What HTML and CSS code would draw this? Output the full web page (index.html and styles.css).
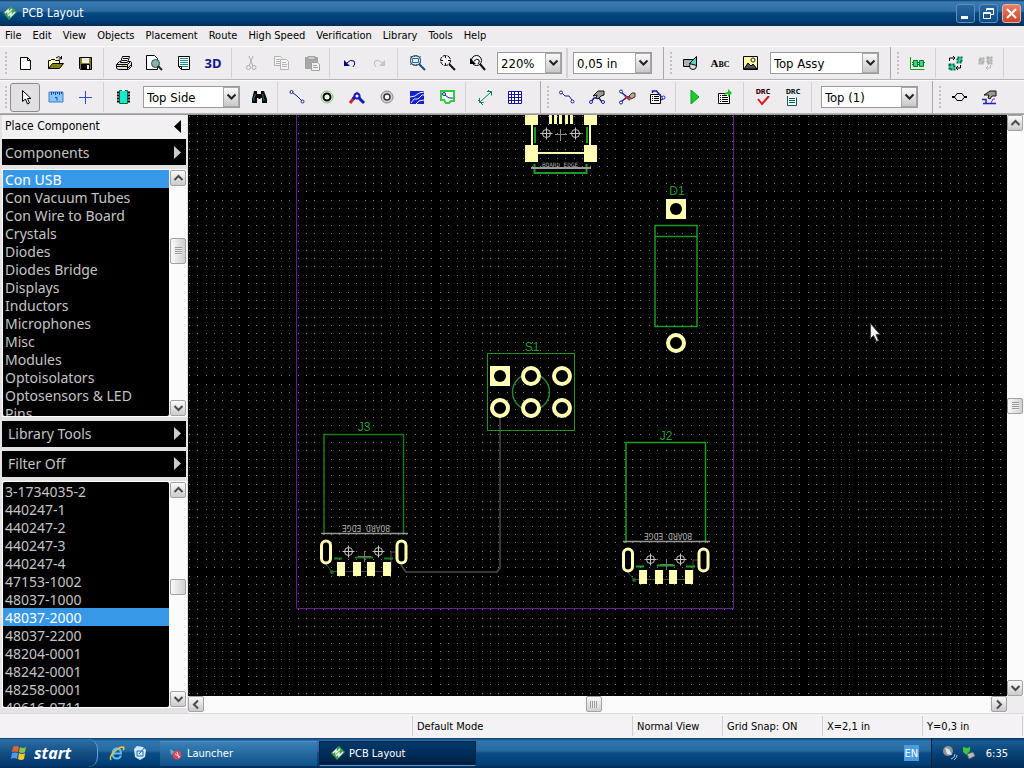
FILE: index.html
```html
<!DOCTYPE html>
<html lang="en">

<head>
    <meta charset="UTF-8">
    <meta name="viewport" content="width=device-width, initial-scale=1.0">
    <title>PCB Layout</title>
    <link rel="stylesheet" href="styles.css">
</head>

<body>
    <header class="title-bar">
        <svg class="app-icon" width="16" height="16" viewBox="0 0 16 16">
            <path d="M9 1l6 6-8 8-6-7z" fill="#3a9a50" />
            <path d="M3 8l3-3v3l4-4M6 11l3-3v3l4-4" fill="none" stroke="#eaf8e6" stroke-width="1.500" />
        </svg>
        <h1>PCB Layout</h1>
        <div class="window-btns">
            <button class="win-btn" title="Minimize"><svg width="17" height="17"><path d="M4 11h7v3h-7z" fill="#fff" /></svg></button>
            <button class="win-btn" title="Restore"><svg width="17" height="17" fill="none" stroke="#fff"><path d="M6.500 6v-2.500h7v6h-3M6 4.500h8" /><path d="M3.500 7.500h7v6h-7zM3 8.500h8" /></svg></button>
            <button class="win-btn close" title="Close"><svg width="17" height="17"><path d="M4 4l9 9M13 4l-9 9" stroke="#fff" stroke-width="2" /></svg></button>
        </div>
    </header>

    <nav class="menu">
        <a href="#">File</a>
        <a href="#">Edit</a>
        <a href="#">View</a>
        <a href="#">Objects</a>
        <a href="#">Placement</a>
        <a href="#">Route</a>
        <a href="#">High Speed</a>
        <a href="#">Verification</a>
        <a href="#">Library</a>
        <a href="#">Tools</a>
        <a href="#">Help</a>
    </nav>

    <!-- standard, drawing and placement toolbars -->
    <div class="toolbar-row">
        <div class="toolbar">
            <span class="grip"></span>
            <button class="tool" title="New"><svg class="icon" viewBox="0 0 20 20"><path d="M5.500 4.500h7l3 3v9h-10z" fill="#fff" stroke="#000" /><path d="M12.500 4.500v3h3" fill="none" stroke="#000" /></svg></button>
            <button class="tool" title="Open"><svg class="icon" viewBox="0 0 20 20"><path d="M3.500 15.500v-8h2l1-1h3l1 1h4v3" fill="#ffffa8" stroke="#000" /><path d="M3.500 15.500l4-5h11l-4 5z" fill="#808020" stroke="#000" /><path d="M11 5q3-3 5 0M16.500 3v3h-3" fill="none" stroke="#000" /></svg></button>
            <button class="tool" title="Save"><svg class="icon" viewBox="0 0 20 20"><path d="M4.500 4.500h12v12h-11l-1-1z" fill="#808020" stroke="#000" /><path d="M7 5h7v5h-7z" fill="#eee" /><path d="M6 11h9v6h-9z" fill="#000" /><path d="M12 12h2v4h-2z" fill="#eee" /></svg></button>
            <span class="sep"></span>
            <button class="tool" title="Print"><svg class="icon" viewBox="0 0 20 20" stroke="#000"><path d="M3.500 11.500l3-3h11l1 1v4l-3 3h-10l-2-1z" fill="#ddd" /><path d="M7.500 9.500l2-6h7l-2 6z" fill="#fff" /><path d="M10 5.500h5M9 7.500h5M3.500 11.500h11v5M14.500 11.500l3-3M4 13.500h10M15 15l4-4" fill="none" /><path d="M9 12.500h3" stroke="#cc0" /></svg></button>
            <button class="tool" title="Print preview"><svg class="icon" viewBox="0 0 20 20"><path d="M3.500 2.500h8l3 3v11h-11z" fill="#fff" stroke="#000" /><circle cx="12.500" cy="10.500" r="4" fill="#7fb5b5" stroke="#444" /><path d="M15 13l4 4" stroke="#222" stroke-width="2" /></svg></button>
            <button class="tool" title="Report"><svg class="icon" viewBox="0 0 20 20"><path d="M5.500 3.500h11v13h-8l-3-3z" fill="#fff" stroke="#000" /><path d="M7 5.500h8M7 7.500h8M7 9.500h8M7 11.500h8M9 13.500h6" stroke="#1a9090" /><path d="M5.500 13.500h3v3" fill="none" stroke="#000" /></svg></button>
            <button class="tool text-3d" title="3D preview">3D</button>
            <span class="sep"></span>
            <button class="tool" title="Cut" disabled><svg class="icon" viewBox="0 0 20 20" fill="none" stroke="#b0b0b0"><path d="M8 3l4 10M12 3l-4 10" /><circle cx="7.500" cy="14.500" r="2" /><circle cx="13" cy="14.500" r="2" /></svg></button>
            <button class="tool" title="Copy" disabled><svg class="icon" viewBox="0 0 20 20" fill="#f4f4f4" stroke="#b4b4b4"><path d="M3.500 3.500h6l2 2v7h-8z" /><path d="M9.500 6.500h6l2 2v8h-8z" /><path d="M5 6.500h4M5 8.500h4M5 10.500h4M11 9.500h4M11 11.500h5M11 13.500h5" /></svg></button>
            <button class="tool" title="Paste" disabled><svg class="icon" viewBox="0 0 20 20" fill="#a8a8a8" stroke="#a0a0a0"><path d="M4.500 4.500h12v11h-12z" /><path d="M7 3.500h7v3h-7z" fill="#ccc" /><path d="M10.500 9.500h6l2 2v6h-8z" fill="#f0f0f0" /><path d="M12 12.500h4M12 14.500h5" /></svg></button>
            <span class="sep"></span>
            <button class="tool" title="Undo"><svg class="icon" viewBox="0 0 20 20"><path d="M8 10q3-4 7-2 2 3-1 6" fill="none" stroke="#000080" /><path d="M5 7v6h6z" fill="#000080" /></svg></button>
            <button class="tool" title="Redo" disabled><svg class="icon" viewBox="0 0 20 20"><path d="M13 10q-3-4-7-2-2 3 1 6" fill="none" stroke="#bbb" /><path d="M16 7v6h-6z" fill="#c4c4c4" /></svg></button>
            <span class="sep"></span>
            <button class="tool" title="Zoom window"><svg class="icon" viewBox="0 0 20 20"><circle cx="8.500" cy="7.500" r="5" fill="#e4eef4" stroke="#333" /><path d="M3.500 3.500h10v8h-10z" fill="none" stroke="#24679a" stroke-dasharray="2 1" /><path d="M5.500 5.500h6v4h-6z" fill="none" stroke="#24679a" /><path d="M12 11l6 6" stroke="#14507c" stroke-width="2" /></svg></button>
            <button class="tool" title="Zoom all"><svg class="icon" viewBox="0 0 20 20"><circle cx="8.500" cy="7.500" r="5" fill="#f4f4f4" stroke="#000" stroke-dasharray="4 1" /><path d="M4 7.500h2M11 7.500h2M8.500 3v2M8.500 10v2" stroke="#000" /><path d="M12 11l6 6" stroke="#111" stroke-width="2" /></svg></button>
            <button class="tool" title="Zoom previous"><svg class="icon" viewBox="0 0 20 20"><circle cx="9.500" cy="7.500" r="5" fill="#f4f4f4" stroke="#000" /><path d="M3 5v6h6z" fill="#000" /><path d="M7 8q3-3 5-1 1 2-1 4" fill="none" stroke="#000" /><path d="M13 11l5 6" stroke="#111" stroke-width="2" /></svg></button>
            <span class="combo zoom">
                <select aria-label="Zoom"><option>220%</option></select>
                <span class="combo-arrow"><svg width="11" height="8"><path d="M1.500 1.500l4 4 4-4" /></svg></span>
            </span>
            <span class="sep narrow"></span>
            <span class="combo grid-size">
                <select aria-label="Grid"><option>0,05 in</option></select>
                <span class="combo-arrow"><svg width="11" height="8"><path d="M1.500 1.500l4 4 4-4" /></svg></span>
            </span>
        </div>
        <div class="toolbar">
            <span class="grip"></span>
            <button class="tool" title="Place shape"><svg class="icon" viewBox="0 0 20 20" stroke="#000"><path d="M3.500 6.500h9v7h-9z" fill="#a8b4b4" /><circle cx="13" cy="13" r="3.500" fill="#ddd" /><path d="M9.500 10.500l7-7v9z" fill="#4fd6d0" /></svg></button>
            <button class="tool abc" title="Place text">A<small>BC</small></button>
            <button class="tool" title="Place picture"><svg class="icon" viewBox="0 0 20 20"><path d="M3.500 3.500h14v13h-14z" fill="#ffffa0" stroke="#000" /><path d="M4 16l4-6 3 3 2-2 4 5z" fill="#555" stroke="#000" /><circle cx="13" cy="7" r="2" fill="#fff" stroke="#222" /></svg></button>
            <span class="combo assy">
                <select aria-label="Drawing layer"><option>Top Assy</option></select>
                <span class="combo-arrow"><svg width="11" height="8"><path d="M1.500 1.500l4 4 4-4" /></svg></span>
            </span>
        </div>
        <div class="toolbar last">
            <span class="grip"></span>
            <button class="tool" title="Placement by list"><svg class="icon" viewBox="0 0 20 20"><path d="M3.500 4v12.500h14" fill="none" stroke="#12a012" /><path d="M6.500 7.500h4v6h-4zM12.500 7.500h4v6h-4z" fill="#24d8a8" stroke="#087808" /><path d="M5 9.500h1M5 11.500h1M11 9.500h1M11 11.500h1M17 9.500h1" stroke="#087808" /></svg></button>
            <span class="sep"></span>
            <button class="tool" title="Update from schematic"><svg class="icon" viewBox="0 0 20 20"><path d="M4.500 11.500h5v5h-5z" fill="#28e0b0" stroke="#064" stroke-width="2" stroke-dasharray="2 1" /><path d="M12.500 4.500h4v5h-4z" fill="#28e0b0" stroke="#064" stroke-width="2" stroke-dasharray="2 1" /><path d="M4.500 8v-3h5M8 3l2 2-2 2M15.500 12v3h-4M13 13l-2 2 2 2" fill="none" stroke="#000" /></svg></button>
            <button class="tool" title="Arrange" disabled><svg class="icon" viewBox="0 0 20 20"><path d="M4.500 5.500h4v5h-4zM12.500 4.500h4v6h-4z" fill="#c4c4c4" stroke="#aaa" stroke-width="2" stroke-dasharray="2 1" /><path d="M15.500 12v3h-4M13 13l-2 2 2 2" fill="none" stroke="#bbb" /></svg></button>
            <span class="sep"></span>
        </div>
    </div>

    <!-- object, route and differential pair toolbars -->
    <div class="toolbar-row objects">
        <div class="toolbar">
            <span class="grip"></span>
            <button class="tool pressed" title="Default mode"><svg class="icon" viewBox="0 0 20 20"><path d="M7.500 3.500v11l3-2.500 2 5 2-1-2-4.500h3.500z" fill="#fff" stroke="#000" /></svg></button>
            <button class="tool" title="Measure"><svg class="icon" viewBox="0 0 20 20"><path d="M4 5h14v10h-14z" fill="#8cc4f4" stroke="#3b7fd0" /><path d="M6.500 5v3M8.500 5v2M10.500 5v3M12.500 5v2M14.500 5v3M16.500 5v2M10 10.500h2v3" fill="none" stroke="#124aa8" /></svg></button>
            <button class="tool" title="Set origin"><svg class="icon" viewBox="0 0 20 20"><path d="M4 10h13v1h-13zM10 4h1v13h-1z" fill="#2450d0" /></svg></button>
            <span class="sep"></span>
            <button class="tool" title="Place component"><svg class="icon" viewBox="0 0 20 20"><path d="M4 5.500h13M4 8.500h13M4 11.500h13M4 14.500h13" stroke="#000" stroke-width="2" /><path d="M6.500 3.500h8v13h-8z" fill="#18e8d0" stroke="#063" /><path d="M9 3.500h3" stroke="#fff" /></svg></button>
            <span class="combo side">
                <select aria-label="Side"><option>Top Side</option></select>
                <span class="combo-arrow"><svg width="11" height="8"><path d="M1.500 1.500l4 4 4-4" /></svg></span>
            </span>
            <button class="tool" title="Find"><svg class="icon" viewBox="0 0 20 20"><path d="M5 4h3v3h4v-3h3l3 8v4h-5v-5h-1l-1 1h-1l-1-1h-1v5h-5v-4z" fill="#0a0a0a" /><path d="M6.500 7l-2 5M13.500 7l1 5M4 13h2M14 13h2" stroke="#1c7c7c" /></svg></button>
            <span class="sep"></span>
            <button class="tool" title="Place trace"><svg class="icon" viewBox="0 0 20 20" fill="none" stroke="#15209a"><path d="M6 6l4 3 5 5" /><circle cx="4.500" cy="5" r="1.500" fill="#fff" /><circle cx="15.500" cy="14.500" r="1.500" fill="#fff" /></svg></button>
            <button class="tool" title="Place via"><svg class="icon" viewBox="0 0 20 20"><circle cx="10" cy="10" r="6" fill="none" stroke="#68d870" /><circle cx="10" cy="10" r="3.500" fill="#fff" stroke="#000" stroke-width="2" /></svg></button>
            <button class="tool" title="Place route"><svg class="icon" viewBox="0 0 20 20" fill="none" stroke-width="3"><path d="M3 16l4-5" stroke="#d42020" /><path d="M6 12l4-5 3 5 4 4" stroke="#1a1ab8" /><circle cx="10" cy="9" r="2.500" fill="#fff" stroke="#1a1ab8" stroke-width="2" /></svg></button>
            <button class="tool" title="Place hole"><svg class="icon" viewBox="0 0 20 20"><circle cx="10" cy="10" r="6" fill="#d0d0d0" stroke="#8a8a8a" /><circle cx="10" cy="10" r="3" fill="#fff" stroke="#333" stroke-width="1.500" /></svg></button>
            <button class="tool" title="Copper pour"><svg class="icon" viewBox="0 0 20 20"><path d="M3 4h14v13h-14z" fill="#1420c8" /><path d="M3 10l5-1 4-3 5-1M4 16l3-4 4 0 4-4 2 0M9 17l3-3 5-1" fill="none" stroke="#eef" /></svg></button>
            <button class="tool" title="Board outline"><svg class="icon" viewBox="0 0 20 20"><path d="M4 4h13v10h-3l-2 2h-3l-2-3h-3z" fill="#f0fff0" stroke="#38c848" stroke-width="2" /><path d="M8 8l4 3h4" fill="none" stroke="#1420a0" /><circle cx="7" cy="7" r="1.500" fill="#fff" stroke="#1420a0" /></svg></button>
            <span class="sep"></span>
            <button class="tool" title="Dimension"><svg class="icon" viewBox="0 0 20 20" fill="none" stroke="#127a6a"><path d="M5 15l11-10M12 4.500h4.500v4M4.500 11v4.500h4M3 13l5 5M13 3l4 4" /></svg></button>
            <button class="tool" title="Place table"><svg class="icon" viewBox="0 0 20 20" fill="#fff" stroke="#15159a"><path d="M3.500 4.500h13v12h-13zM3.500 7.500h13M3.500 10.500h13M3.500 13.500h13M6.500 4.500v12M9.500 4.500v12M13.500 4.500v12" /></svg></button>
        </div>
        <div class="toolbar">
            <span class="grip"></span>
            <button class="tool" title="Route manual"><svg class="icon" viewBox="0 0 20 20" fill="none" stroke="#15209a"><path d="M5 6l3 3h4l3 4" /><circle cx="4" cy="5.500" r="1.500" fill="#fff" /><circle cx="15.500" cy="14.500" r="1.500" fill="#fff" /></svg></button>
            <button class="tool" title="Edit traces"><svg class="icon" viewBox="0 0 20 20" fill="none"><path d="M4 15l3-4h5l3 4" stroke="#15209a" stroke-width="1.500" /><circle cx="4" cy="15" r="1.500" fill="#fff" stroke="#15209a" /><circle cx="16" cy="15" r="1.500" fill="#fff" stroke="#15209a" /><path d="M6 9l5-5h6v4l-3 1-3 3-2-1 1-3z" fill="#9a9a92" stroke="#111" /></svg></button>
            <button class="tool" title="Free edit"><svg class="icon" viewBox="0 0 20 20" fill="none"><path d="M4 5l6 5-6 5M10 10h6" stroke="#15209a" stroke-width="1.500" /><circle cx="4" cy="4.500" r="1.500" fill="#fff" stroke="#15209a" /><circle cx="4" cy="15.500" r="1.500" fill="#fff" stroke="#15209a" /><path d="M12 9l3-3h3v4l-4 2z" fill="#b8a890" stroke="#333" /><path d="M8 9l5 4" stroke="#d02020" stroke-width="2" /></svg></button>
            <button class="tool" title="Route properties"><svg class="icon" viewBox="0 0 20 20"><path d="M3.500 7.500h10v9h-10z" fill="#fff" stroke="#000" /><path d="M5 9.500h1M7 9.500h5M5 11.500h1M7 11.500h5M5 13.500h1M7 13.500h5" stroke="#000" /><path d="M5.500 6v-2h4l5 6M14 13l3-2" fill="none" stroke="#15209a" stroke-width="1.500" /><circle cx="16.500" cy="10.500" r="1.500" fill="#fff" stroke="#15209a" /></svg></button>
            <span class="sep"></span>
            <button class="tool" title="Run autorouter"><svg class="icon" viewBox="0 0 20 20"><path d="M6 3l8 7-8 7z" fill="#14d028" stroke="#0a9a1c" /></svg></button>
            <button class="tool" title="Autorouter setup"><svg class="icon" viewBox="0 0 20 20"><path d="M3.500 6.500h11v10h-11z" fill="#fff" stroke="#000" /><path d="M5 8.500h1M7 8.500h5M5 10.500h1M7 10.500h6M5 12.500h1M7 12.500h6M5 14.500h1M7 14.500h6" stroke="#000" /><path d="M9 8q1-3 4-3v-3l4 4-4 4v-3z" fill="#18c028" /></svg></button>
            <span class="sep"></span>
            <button class="tool stacked" title="Check design rules"><span>DRC</span><svg width="14" height="10"><path d="M2 3l4 5 7-8" fill="none" stroke="#d81818" stroke-width="2" /></svg></button>
            <button class="tool stacked report" title="DRC report"><span>DRC</span><svg width="14" height="10"><path d="M1.500 0v9.500h9v-8" fill="#fff" stroke="#0a5a5a" /><path d="M3 2.500h6M3 4.500h6M3 6.500h6" stroke="#0a5a5a" /></svg></button>
            <span class="sep"></span>
            <span class="combo side">
                <select aria-label="Route layer"><option>Top (1)</option></select>
                <span class="combo-arrow"><svg width="11" height="8"><path d="M1.500 1.500l4 4 4-4" /></svg></span>
            </span>
        </div>
        <div class="toolbar last">
            <span class="grip"></span>
            <button class="tool" title="Differential pair"><svg class="icon" viewBox="0 0 20 20" fill="none" stroke="#000"><path d="M3 9.500h3l2-3h5l2 3h3M3 10.500h3l2 3h5l2-3h3" /></svg></button>
            <button class="tool" title="Edit pair"><svg class="icon" viewBox="0 0 20 20" fill="none"><path d="M3 12.500h4v4h-3M7 16.500h10" stroke="#2222b8" stroke-width="1.500" /><path d="M5 8l6-4h6v5l-4 0-2 3-2-1 1-3z" fill="#9a9a92" stroke="#111" /><path d="M12 16l2-4h2" stroke="#7a22b8" /></svg></button>
        </div>
    </div>

    <main class="workspace">
        <aside class="panel">
            <div class="panel-title">
                <span>Place Component</span>
                <svg width="8" height="13"><path d="M8 0v13l-7-6.500z" fill="#000" /></svg>
            </div>
            <button class="section-btn">Components<svg width="8" height="13"><path d="M0 0v13l7-6.500z" fill="#ccc" /></svg></button>
            <div class="list-box libraries">
                <select size="14" aria-label="Libraries">
                    <option selected>Con USB</option>
                    <option>Con Vacuum Tubes</option>
                    <option>Con Wire to Board</option>
                    <option>Crystals</option>
                    <option>Diodes</option>
                    <option>Diodes Bridge</option>
                    <option>Displays</option>
                    <option>Inductors</option>
                    <option>Microphones</option>
                    <option>Misc</option>
                    <option>Modules</option>
                    <option>Optoisolators</option>
                    <option>Optosensors &amp; LED</option>
                    <option>Pins</option>
                </select>
                <div class="scroll-bar">
                    <button title="Up"><svg width="11" height="8"><path d="M1.500 6l4-4 4 4" /></svg></button>
                    <span class="before"></span><span class="thumb"></span><span class="after"></span>
                    <button title="Down"><svg width="11" height="8"><path d="M1.500 2l4 4 4-4" /></svg></button>
                </div>
            </div>
            <button class="section-btn indent">Library Tools<svg width="8" height="13"><path d="M0 0v13l7-6.500z" fill="#ccc" /></svg></button>
            <button class="section-btn indent">Filter Off<svg width="8" height="13"><path d="M0 0v13l7-6.500z" fill="#ccc" /></svg></button>
            <div class="list-box parts">
                <select size="13" aria-label="Parts">
                    <option>3-1734035-2</option>
                    <option>440247-1</option>
                    <option>440247-2</option>
                    <option>440247-3</option>
                    <option>440247-4</option>
                    <option>47153-1002</option>
                    <option>48037-1000</option>
                    <option selected>48037-2000</option>
                    <option>48037-2200</option>
                    <option>48204-0001</option>
                    <option>48242-0001</option>
                    <option>48258-0001</option>
                    <option>49616-0711</option>
                </select>
                <div class="scroll-bar">
                    <button title="Up"><svg width="11" height="8"><path d="M1.500 6l4-4 4 4" /></svg></button>
                    <span class="before"></span><span class="thumb plain"></span><span class="after"></span>
                    <button title="Down"><svg width="11" height="8"><path d="M1.500 2l4 4 4-4" /></svg></button>
                </div>
            </div>
        </aside>

        <section class="design">
            <svg class="board">
                <defs>
                    <g id="target" fill="none" stroke="#c4c4c4">
                        <circle r="4" />
                        <path d="M-6 0h12M0-6v12" />
                    </g>
                    <g id="pad">
                        <circle r="8" fill="#000" stroke="#ffffb4" stroke-width="4" />
                    </g>
                    <g id="square-pad">
                        <path d="M-10-10h20v20h-20z" fill="#ffffb4" />
                        <circle r="6" fill="#000" />
                    </g>
                    <g id="usb">
                        <path d="M324 535v-100.500h79.500v100.500" fill="none" stroke="currentColor" stroke-width="1.500" />
                        <path d="M321 533.500h87" stroke="#999" stroke-width="1.500" />
                        <text class="edge" transform="rotate(180 366 528)" x="366" y="531">BOARD EDGE</text>
                        <path d="M326 564l6 8M391 572v-20h5" fill="none" stroke="#4c4c4c" />
                        <path d="M332 571.500h58" stroke="#4a4a28" />
                        <circle cx="332" cy="572" r="2" fill="#1d6a2a" />
                        <path d="M334 558.500h8M355 557.500h18M384 558.500h9" stroke="currentColor" stroke-width="2" />
                        <path d="M364.500 551v11M358 556.500h13" stroke="#777" />
                        <rect x="321.500" y="541" width="9" height="22" rx="4.500" fill="#000" stroke="#ffffb4" stroke-width="3" />
                        <rect x="397" y="541" width="9" height="22" rx="4.500" fill="#000" stroke="#ffffb4" stroke-width="3" />
                        <path d="M337 562h8v14h-8zM353 562h8v14h-8zM367 562h8v14h-8zM383 562h8v14h-8z" fill="#ffffb4" />
                        <use href="#target" x="348.500" y="551.500" />
                        <use href="#target" x="378.500" y="551.500" />
                    </g>
                </defs>

                <path class="grid-dots" />

                <g transform="translate(-188 -115)">
                    <path d="M296.500 100v508.500h437v-508.500" fill="none" stroke="#6a1c98" />

                    <!-- micro USB -->
                    <path d="M525 115h13v10h-13zM584 115h13v10h-13zM525 145h13v17h-13zM584 145h13v17h-13z" fill="#ffffb4" />
                    <path d="M531 125h2v20h-2zM589 125h2v20h-2zM538 152h46v2h-46z" fill="#ffffb4" />
                    <path d="M549 115h3v9h-3zM554 115h3v9h-3zM559 115h3v9h-3zM565 115h3v9h-3zM570 115h3v9h-3z" fill="#ffffb4" />
                    <path d="M535 127v16M587 127v16M534.500 164v9h52v-9" fill="none" stroke="#1d9a26" stroke-width="2" />
                    <path d="M555 134.500h12M560.500 129v12" stroke="#888" />
                    <use href="#target" x="546.500" y="133.500" />
                    <use href="#target" x="575.500" y="133.500" />
                    <text class="edge small" x="560" y="167">BOARD EDGE</text>
                    <path d="M531 168h60" stroke="#999" stroke-width="2" />

                    <!-- D1 -->
                    <text class="ref" x="677" y="195">D1</text>
                    <use href="#square-pad" x="676" y="209" />
                    <path d="M655 225.500h42v101h-42zM655 236.500h42" fill="none" stroke="#1d9a26" stroke-width="1.500" />
                    <use href="#pad" x="676" y="343" />

                    <!-- S1 -->
                    <path d="M500 418v150l-3 4h-91l-5-7" fill="none" stroke="#4c4c4c" stroke-width="1.500" />
                    <text class="ref" x="532" y="351">S1</text>
                    <path d="M487.500 353.500h87v77h-87z" fill="none" stroke="#1d9a26" />
                    <circle cx="531" cy="392" r="18.500" fill="none" stroke="#1d8a30" stroke-width="1.500" />
                    <use href="#square-pad" x="500" y="376" />
                    <use href="#pad" x="531" y="376" />
                    <use href="#pad" x="562" y="376" />
                    <use href="#pad" x="500" y="408" />
                    <use href="#pad" x="531" y="408" />
                    <use href="#pad" x="562" y="408" />

                    <text class="ref" x="364" y="431">J3</text>
                    <use class="usb-dim" href="#usb" />
                    <text class="ref" x="666" y="440">J2</text>
                    <use class="usb-bright" href="#usb" x="302" y="8" />

                    <path d="M870.500 323.500v15l3-3 3 6 2-1-2.500-6h4z" fill="#f4f4f4" stroke="#444" />
                </g>
            </svg>
            <div class="scroll-bar">
                <button title="Up"><svg width="11" height="8"><path d="M1.500 6l4-4 4 4" /></svg></button>
                <span class="before"></span><span class="thumb"></span><span class="after"></span>
                <button title="Down"><svg width="11" height="8"><path d="M1.500 2l4 4 4-4" /></svg></button>
            </div>
            <div class="scroll-bar horizontal">
                <button title="Left"><svg width="8" height="11"><path d="M6 1.500l-4 4 4 4" /></svg></button>
                <span class="before"></span><span class="thumb"></span><span class="after"></span>
                <button title="Right"><svg width="8" height="11"><path d="M2 1.500l4 4-4 4" /></svg></button>
            </div>
        </section>
    </main>

    <div class="status-bar">
        <span class="message"></span>
        <span class="mode">Default Mode</span>
        <span class="view">Normal View</span>
        <span>Grid Snap: ON</span>
        <span>X=2,1 in</span>
        <span>Y=0,3 in</span>
    </div>

    <footer class="taskbar">
        <button class="start">
            <svg width="18" height="18" viewBox="0 0 18 18">
                <path d="M3 3q3-2 6 0l-1 5q-3-1-6 0z" fill="#e8602c" />
                <path d="M10 3q3 2 6 0l-1 5q-3 2-6 0z" fill="#8cc63c" />
                <path d="M2 9q3-1 6 0l-1 6q-3-2-6 0z" fill="#4c9ae8" />
                <path d="M9 9q3 2 6 0l-1 6q-3 2-6 0z" fill="#fbc82c" />
            </svg>
            start
        </button>
        <div class="quick">
            <a href="#" title="Internet Explorer"><svg width="16" height="16" viewBox="0 0 16 16" fill="none"><path d="M4 8.500h8q0-5-4-5-4 0-4.500 5 0 5 4.500 5 3 0 4-3" stroke="#5cc0f8" stroke-width="2" /><path d="M2 15q-2-3 3-8t9-5q2 1 0 3" stroke="#f4c430" stroke-width="1.500" /></svg></a>
            <a href="#" title="Show Desktop"><svg width="16" height="16" viewBox="0 0 16 16"><path d="M2 4l3-3 6 1 3 3-1 7-5 3-5-3z" fill="#cfe8fa" /><path d="M5 6h6v5h-6zM7 9l6-7" fill="none" stroke="#2a6aa8" /></svg></a>
        </div>
        <button class="task">
            <svg width="16" height="16" viewBox="0 0 16 16"><path d="M2 3l5 3-4 3z" fill="#58b8d8" /><circle cx="9" cy="9" r="4.500" fill="#d8485c" /><path d="M7 8l5 3M9 6l2 6" stroke="#fbd8dc" /></svg>
            Launcher
        </button>
        <button class="task active">
            <svg width="16" height="16" viewBox="0 0 16 16">
                <path d="M9 1l6 6-8 8-6-7z" fill="#3a9a50" />
                <path d="M3 8l3-3v3l4-4M6 11l3-3v3l4-4" fill="none" stroke="#eaf8e6" stroke-width="1.500" />
            </svg>
            PCB Layout
        </button>
        <button class="lang">EN</button>
        <div class="tray">
            <svg width="16" height="16" viewBox="0 0 16 16"><circle cx="6" cy="6" r="5" fill="#8c9498" /><path d="M3 3l4 1 3 6-5-1z" fill="#e0e4e6" /><path d="M9 14q4-1 4-5M12 15q3-2 3-5" fill="none" stroke="#9cc8f0" /></svg>
            <svg width="16" height="16" viewBox="0 0 16 16"><path d="M2 2l4 1 3-1v4l-3 3 1 2-5-4z" fill="#3cc83c" /><path d="M6 9l6-2 2 4-6 3z" fill="#b8bcc0" stroke="#5c6468" /></svg>
            <time>6:35</time>
        </div>
    </footer>

    <script>
        // snap grid of the design area
        const step = 8.36;
        let dots = "";

        for (let row = 0; row < 130; row++) {
            for (let col = 0; col < 250; col++) {
                dots += `M${Math.round(1 + col * step)} ${Math.round(1 + row * step)}h1v1h-1z`;
            }
        }

        document.querySelector('.grid-dots').setAttribute("d", dots);
    </script>
</body>

</html>
```
FILE: styles.css
```css
* {
    box-sizing: border-box;
}

html,
body {
    padding: 0;
    margin: 0;

    height: 100%;
}

body {
    display: flex;
    flex-direction: column;
    overflow: hidden;

    background-color: #eeecee;
    font-family: "DejaVu Sans Condensed", "Noto Sans", sans-serif;
    font-size: 11px;
    color: #000;
}

button,
select {
    font: inherit;
    color: inherit;
    border: 0;
    padding: 0;
    margin: 0;
    background: none;
}

a {
    color: inherit;
    text-decoration: none;
}

svg {
    display: block;
    flex: none;
}

/* title bar */
.title-bar {
    display: flex;
    align-items: center;
    flex: none;

    height: 26px;
    padding: 0 3px 0 2px;
    color: #fff;
    background: linear-gradient(#0c3c68, #3a7cb4 2px, #2c6ca4 11px, #06487e 13px, #00407a 19px, #022c56);
}

.title-bar h1 {
    flex: 1;
    margin: 0 0 0 4px;
    font-size: 12px;
    font-weight: normal;
}

.window-btns {
    display: flex;
    gap: 4px;
}

.win-btn {
    width: 19px;
    height: 19px;
    border: 1px solid #5c90bc;
    border-radius: 3px;
    background: linear-gradient(#2c68a0, #0a4a82);
}

.win-btn.close {
    border-color: #f0b0a0;
    background: linear-gradient(#e88068, #d04428);
}

/* menu */
.menu {
    display: flex;
    align-items: center;
    flex: none;
    gap: 11px;

    height: 20px;
    padding: 0 5px;
    line-height: 18px;
}

/* toolbars */
.toolbar-row {
    display: flex;
    flex: none;
    height: 34px;
    border-top: 1px solid #fafafa;
    border-bottom: 1px solid #b4b2b4;
}

.toolbar {
    display: flex;
    align-items: center;
    flex: none;
    padding-right: 7px;
    border-right: 1px solid #aaa8aa;
}

.objects .toolbar {
    padding-right: 10px;
}

.toolbar + .toolbar {
    padding-left: 1px;
}

.toolbar.last {
    border-right: 0;
}

.grip {
    width: 4px;
    height: 24px;
    margin: 0 2px 0 4px;
    background-image: radial-gradient(circle, #c4c2c4 1px, transparent 1px);
    background-size: 4px 4px;
}

.sep {
    width: 8px;
    height: 30px;
    background: linear-gradient(90deg, transparent 3px, #d4d2d4 3px, #d4d2d4 4px, transparent 4px);
}

.sep.narrow {
    width: 2px;
    background: #d4d2d4;
}

.tool {
    display: flex;
    align-items: center;
    justify-content: center;
    width: 30px;
    height: 29px;
}

.tool.pressed {
    border: 1px solid #8c8a8c;
    border-radius: 3px;
    background-color: #e2e0e2;
}

.icon {
    width: 20px;
    height: 20px;
}

.text-3d {
    font-family: "Noto Sans", sans-serif;
    font-size: 13px;
    font-weight: bold;
    color: #14148c;
}

.abc {
    align-items: baseline;
    height: auto;
    font-family: "Liberation Serif", serif;
    font-size: 11px;
    font-weight: bold;
}

.abc small {
    font-size: 8px;
}

.stacked {
    flex-direction: column;
    font-size: 7px;
    font-weight: bold;
    line-height: 7px;
    color: #300;
}

.stacked.report {
    color: #022;
}

.combo {
    display: flex;
    height: 22px;
    margin: 0 4px 0 5px;
    border: 1px solid #9c9a9c;
    background-color: #fff;
}

.combo select {
    flex: 1;
    min-width: 0;
    padding-left: 3px;
    appearance: none;
    font-size: 13px;
}

.combo-arrow {
    display: flex;
    align-items: center;
    justify-content: center;
    width: 16px;
    border: 1px solid #a8a6a8;
    background: linear-gradient(#fafafa, #c8c8c8);
}

.combo-arrow path {
    fill: none;
    stroke: #222;
    stroke-width: 2;
}

.zoom {
    width: 65px;
}

.grid-size {
    width: 79px;
}

.assy {
    width: 109px;
}

.side {
    width: 97px;
}

/* side panel */
.workspace {
    display: flex;
    flex: 1;
    min-height: 0;
    border-top: 1px solid #9a989a;
}

.panel {
    display: flex;
    flex-direction: column;
    width: 188px;
    padding: 0 1px 5px 2px;
    background-color: #e4e2e4;
}

.panel-title {
    display: flex;
    align-items: center;
    justify-content: space-between;
    flex: none;
    height: 24px;
    padding: 0 6px 2px 3px;
    background-color: #f2f0f2;
    font-size: 12px;
}

.section-btn {
    display: flex;
    align-items: center;
    justify-content: space-between;
    flex: none;

    height: 26px;
    margin-right: 1px;
    padding: 0 4px 0 3px;
    background-color: #000;
    color: #c4c4c4;
    font-family: "Noto Sans", sans-serif;
    font-size: 14px;
}

.section-btn.indent {
    padding-left: 6px;
}

.section-btn + .section-btn {
    margin-top: 4px;
}

.list-box {
    display: flex;
    min-height: 0;
    margin: 4px 0;
    border: 1px solid #fff;
}

.libraries {
    flex: 12 1 0;
}

.parts {
    flex: 11 1 0;
    margin-bottom: 0;
}

.list-box select {
    flex: 1;
    min-width: 0;
    height: 100%;
    overflow: hidden;
    appearance: none;
    background-color: #000;
    color: #c4c4c4;
    font-family: "Noto Sans", sans-serif;
    font-size: 14px;
    outline: 0;
}

.list-box option {
    height: 18px;
    min-height: 18px;
    padding: 0 2px;
    line-height: 18px;
}

.list-box option:checked {
    background: linear-gradient(#3898e8, #3898e8);
    -webkit-text-fill-color: #fff;
}

/* scroll bars */
.scroll-bar {
    display: flex;
    flex-direction: column;
    width: 17px;
    background-color: #fbfbfb;
}

.list-box .scroll-bar {
    align-items: flex-end;
}

.scroll-bar.horizontal {
    flex-direction: row;
    width: auto;
    height: 17px;
}

.scroll-bar button {
    display: flex;
    align-items: center;
    justify-content: center;
    flex: none;

    width: 16px;
    height: 16px;
    border: 1px solid #a4a2a4;
    border-radius: 2px;
    background: linear-gradient(#fafafa, #cccacc);
}

.scroll-bar button path {
    fill: none;
    stroke: #4a4a4a;
    stroke-width: 2;
}

.thumb {
    display: block;
    flex: none;

    width: 16px;
    height: 16px;
    border: 1px solid #a4a2a4;
    border-radius: 2px;
    background: repeating-linear-gradient(#999 0 1px, #eee 1px 2px) center / 7px 8px no-repeat, linear-gradient(90deg, #fafafa, #d0ced0);
}

.thumb.plain {
    background: linear-gradient(90deg, #fafafa, #d0ced0);
}

.horizontal .thumb {
    background: repeating-linear-gradient(90deg, #999 0 1px, #eee 1px 2px) center / 8px 7px no-repeat, linear-gradient(#fafafa, #d0ced0);
}

.libraries .thumb {
    height: 26px;
}

.before,
.after {
    flex: 50;
}

.horizontal .before {
    flex: 49;
}

.libraries .after {
    flex: 130;
}

.parts .after {
    flex: 59;
}

/* design area */
.design {
    display: grid;
    grid-template-columns: 1fr 17px;
    grid-template-rows: 1fr 17px;
    flex: 1;
    min-width: 0;
}

.board {
    width: 100%;
    height: 100%;
    background-color: #000;
    overflow: hidden;
}

.grid-dots {
    fill: #7c7c7c;
}

.ref {
    fill: #1d9a30;
    font-family: "Liberation Sans", sans-serif;
    font-size: 12px;
    text-anchor: middle;
}

.edge {
    fill: #a8a8a8;
    font-family: "DejaVu Sans Mono", monospace;
    font-size: 8px;
    text-anchor: middle;
}

.edge.small {
    font-size: 6px;
}

.usb-dim {
    color: #187a1e;
}

.usb-bright {
    color: #14a41c;
}

/* status bar */
.status-bar {
    display: flex;
    flex: none;
    height: 25px;
    padding: 2px 1px 2px 0;
    border-top: 1px solid #dcdadc;
    background-color: #f4f2f4;
    line-height: 22px;
}

.status-bar span {
    width: 100px;
    padding-left: 4px;
    border-right: 1px solid #d0ced0;
    white-space: nowrap;
}

.status-bar .message {
    flex: 1;
}

.status-bar .mode {
    width: 220px;
}

.status-bar .view {
    width: 90px;
}

/* taskbar */
.taskbar {
    display: flex;
    align-items: center;
    flex: none;
    height: 30px;
    background: linear-gradient(#0a3c6a, #3078b0 3px, #2468a0 13px, #0a4c84 15px, #004078 26px, #022c56);
    color: #fff;
}

.start {
    display: flex;
    align-items: center;
    gap: 6px;

    width: 98px;
    height: 28px;
    padding-left: 10px;
    border-right: 1px solid #6ca0cc;
    border-radius: 0 10px 10px 0;
    background: linear-gradient(#2c70a8, #144e84 14px, #003468);
    font-family: "Noto Sans", sans-serif;
    font-size: 16px;
    font-style: italic;
    font-weight: bold;
}

.quick {
    display: flex;
    gap: 7px;
    width: 62px;
    padding-left: 11px;
}

.task {
    display: flex;
    align-items: center;
    gap: 3px;

    width: 157px;
    height: 25px;
    padding-left: 8px;
    border-top: 1px solid #4c8cc0;
    background: linear-gradient(#3a80ba, #24689e 12px, #10528a);
}

.task.active {
    margin-left: 2px;
    padding-left: 10px;
    border: 1px solid #0a2440;
    border-bottom-color: #5c98c8;
    background: linear-gradient(#04386a, #002c58 12px, #001c3c);
}

.lang {
    width: 15px;
    height: 16px;
    margin: 0 12px 0 auto;
    background-color: #4c9ae0;
}

.tray {
    display: flex;
    align-items: center;
    gap: 3px;

    height: 30px;
    padding: 0 16px 0 10px;
    border-left: 1px solid #02203c;
    background: linear-gradient(#04305a, #185c94 3px, #0a4478 14px, #002a54);
}

.tray time {
    margin-left: 6px;
}
```
